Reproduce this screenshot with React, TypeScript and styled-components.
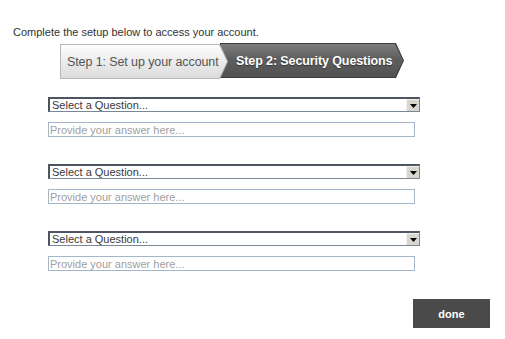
import React from "react";
import styled, { createGlobalStyle } from "styled-components";

const GlobalStyle = createGlobalStyle`
  body {
    margin: 0;
    background: #ffffff;
    font-family: "Liberation Sans", Arial, sans-serif;
  }
`;

const Page = styled.div`
  width: 505px;
  height: 339px;
  padding: 26px 0 0 13px;
  box-sizing: border-box;
  position: relative;
`;

const Intro = styled.p`
  margin: 0;
  font-size: 11px;
  line-height: 13px;
  color: #333;
`;

const Steps = styled.div`
  display: flex;
  margin: 5px 0 0 47px;
  height: 35px;
`;

const arrow = "polygon(0 0, calc(100% - 8px) 0, 100% 50%, calc(100% - 8px) 100%, 0 100%)";

const Step = styled.div<{ $active?: boolean }>`
  position: relative;
  z-index: ${(p) => (p.$active ? 1 : 2)};
  display: flex;
  align-items: center;
  height: 35px;
  box-sizing: border-box;
  margin-left: ${(p) => (p.$active ? "-8px" : "0")};
  margin-top: ${(p) => (p.$active ? "-1px" : "0")};
  width: ${(p) => (p.$active ? "184px" : "168px")};
  padding-left: ${(p) => (p.$active ? "16px" : "7px")};
  clip-path: ${arrow};
  background: ${(p) => (p.$active ? "#3d3d3d" : "#b8b8b8")};
  font-size: 12.5px;
  letter-spacing: -0.1px;
  font-weight: ${(p) => (p.$active ? "bold" : "normal")};
  color: ${(p) => (p.$active ? "#fff" : "#555")};
  text-shadow: ${(p) => (p.$active ? "0 1px 1px #333" : "none")};
  white-space: nowrap;

  &::before {
    content: "";
    position: absolute;
    inset: 1px;
    clip-path: ${arrow};
    background: ${(p) =>
      p.$active
        ? "linear-gradient(#7c7c7c, #5e5e5e 45%, #525252)"
        : "linear-gradient(#fdfdfd, #ececec 50%, #dcdcdc)"};
    z-index: -1;
  }
`;

const Questions = styled.div`
  display: flex;
  flex-direction: column;
  gap: 27px;
  margin: 18px 0 0 35px;
`;

const Group = styled.div`
  display: flex;
  flex-direction: column;
  gap: 10px;
`;

const SelectBox = styled.div`
  display: flex;
  width: 372px;
  height: 15px;
  box-sizing: border-box;
  border: 1px solid #7a8796;
  border-top: 2px solid #4c5560;
  border-left: 2px solid #4c5560;
  background: #fff;
`;

const Select = styled.select`
  flex: 1;
  appearance: none;
  border: none;
  outline: none;
  padding: 0 2px;
  margin: 0;
  background: transparent;
  font-family: "Liberation Sans", Arial, sans-serif;
  font-size: 11px;
  line-height: 12px;
  height: 12px;
  color: #3a3a3a;
`;

const ArrowButton = styled.span`
  width: 13px;
  height: 12px;
  display: flex;
  align-items: center;
  justify-content: center;
  background: #d9d6d0;
  border-left: 1px solid #f2f2f2;
  border-top: 1px solid #f2f2f2;
  box-sizing: border-box;
`;

const AnswerInput = styled.input`
  width: 367px;
  height: 15px;
  box-sizing: border-box;
  border: 1px solid #a3b6cc;
  padding: 0 1px;
  margin: 0;
  outline: none;
  font-family: "Liberation Sans", Arial, sans-serif;
  font-size: 11px;
  color: #333;

  &::placeholder {
    color: #a0a0a0;
  }
`;

const Footer = styled.div`
  display: flex;
  justify-content: flex-end;
  margin: 28px 15px 0 0;
`;

const DoneButton = styled.button`
  width: 77px;
  height: 29px;
  border: none;
  background: #4a4a4a;
  color: #fff;
  font-family: "Liberation Sans", Arial, sans-serif;
  font-size: 11px;
  font-weight: bold;
  cursor: pointer;
`;

function QuestionGroup() {
  return (
    <Group>
      <SelectBox>
        <Select defaultValue="">
          <option value="">Select a Question...</option>
        </Select>
        <ArrowButton>
          <svg width="7" height="4" viewBox="0 0 7 4">
            <path d="M0 0h7L3.5 4z" fill="#000" />
          </svg>
        </ArrowButton>
      </SelectBox>
      <AnswerInput type="text" placeholder="Provide your answer here..." />
    </Group>
  );
}

export default function App() {
  return (
    <Page>
      <GlobalStyle />
      <Intro>Complete the setup below to access your account.</Intro>
      <Steps>
        <Step>Step 1: Set up your account</Step>
        <Step $active>Step 2: Security Questions</Step>
      </Steps>
      <Questions>
        <QuestionGroup />
        <QuestionGroup />
        <QuestionGroup />
      </Questions>
      <Footer>
        <DoneButton>done</DoneButton>
      </Footer>
    </Page>
  );
}
